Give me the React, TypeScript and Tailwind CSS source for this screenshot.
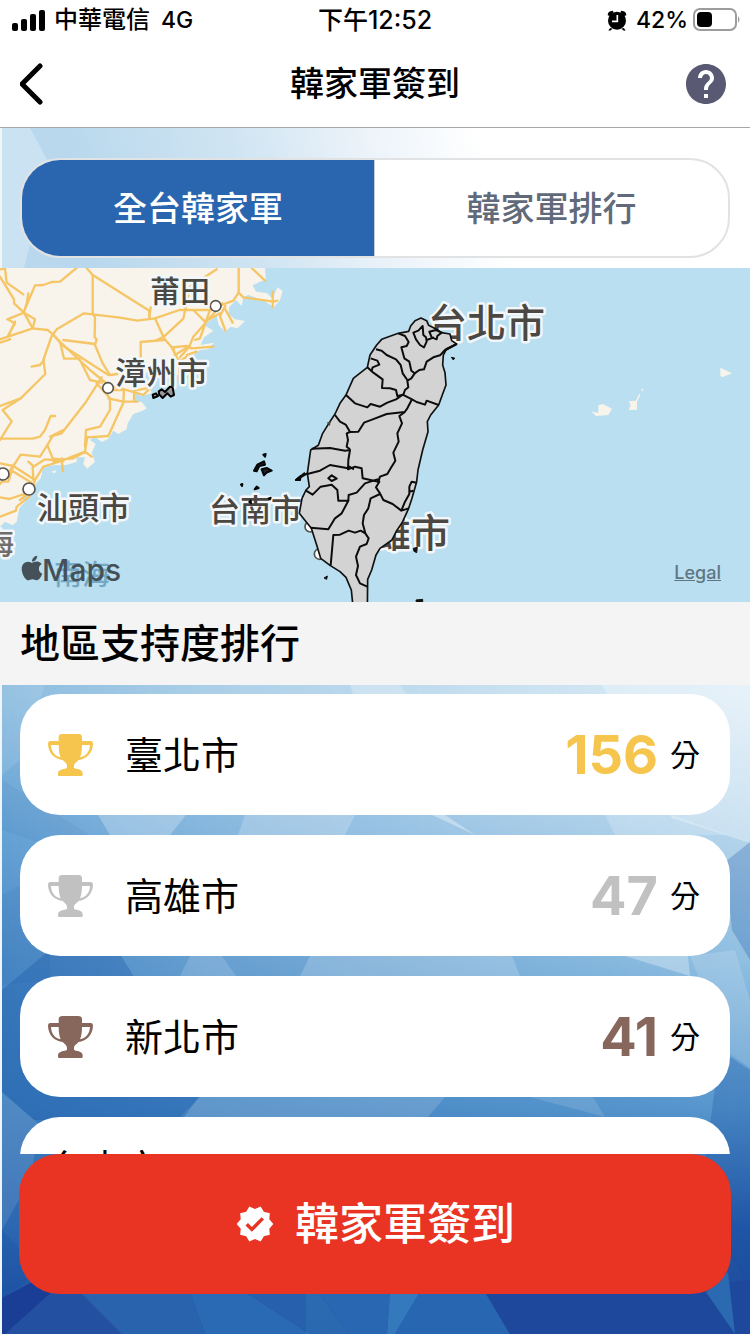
import { FaApple } from "react-icons/fa";
import { MdHelp, MdVerified } from "react-icons/md";

type Region = { name: string; score?: number; color?: string };

const regions: Region[] = [
  { name: "臺北市", score: 156, color: "#f5c54e" },
  { name: "高雄市", score: 47, color: "#c1c1c1" },
  { name: "新北市", score: 41, color: "#87665c" },
  { name: "台中市" },
];

function Backdrop() {
  return (
    <svg
      className="absolute inset-0 -z-10 h-full w-full"
      viewBox="0 0 750 1334"
      preserveAspectRatio="none"
      aria-hidden="true"
    >
      <defs>
        <linearGradient id="bd-left" x1="0" y1="0" x2="0" y2="1">
          <stop offset="0.52" stopColor="#8bbcdf" />
          <stop offset="0.62" stopColor="#67a3d5" />
          <stop offset="0.72" stopColor="#4b8ac6" />
          <stop offset="0.83" stopColor="#3b7cbd" />
          <stop offset="0.92" stopColor="#2d68b2" />
          <stop offset="1" stopColor="#1f4c9f" />
        </linearGradient>
        <linearGradient id="bd-right" x1="0" y1="0" x2="0" y2="1">
          <stop offset="0.52" stopColor="#dcecf6" />
          <stop offset="0.62" stopColor="#b7d6ec" />
          <stop offset="0.72" stopColor="#90bfe1" />
          <stop offset="0.83" stopColor="#5897cd" />
          <stop offset="0.92" stopColor="#2559a8" />
          <stop offset="1" stopColor="#1a4596" />
        </linearGradient>
        <linearGradient id="bd-fade" x1="0" y1="0" x2="1" y2="0">
          <stop offset="0" stopColor="#000" />
          <stop offset="0.28" stopColor="#666" />
          <stop offset="0.72" stopColor="#ccc" />
          <stop offset="1" stopColor="#fff" />
        </linearGradient>
        <linearGradient id="bd-top" gradientUnits="userSpaceOnUse" x1="80" y1="200" x2="470" y2="100">
          <stop offset="0" stopColor="#b9d8ed" />
          <stop offset="0.4" stopColor="#cfe4f2" />
          <stop offset="0.7" stopColor="#eaf2f9" />
          <stop offset="1" stopColor="#ffffff" />
        </linearGradient>
        <mask id="bd-mask">
          <rect width="750" height="1334" fill="url(#bd-fade)" />
        </mask>
      </defs>
      <rect width="750" height="1334" fill="url(#bd-left)" />
      <rect width="750" height="1334" fill="url(#bd-right)" mask="url(#bd-mask)" />
      <rect width="750" height="300" fill="url(#bd-top)" />
      <g fill="#ffffff">
        <path d="M0 128 H30 L50 165 L24 268 H0Z" opacity="0.25" />
        <path d="M350 685 L355 700 H410 L400 685Z" opacity="0.25" />
        <path d="M600 680 H750 V843 L672 818Z" opacity="0.3" />
        <path d="M98 815 L110 835 H170 L186 815Z" opacity="0.25" />
        <path d="M245 815 L238 835 H345 L355 815Z" opacity="0.2" />
        <path d="M432 815 L475 835 L445 815Z" opacity="0.35" />
        <path d="M605 815 L615 835 H728 L672 815Z" opacity="0.2" />
        <path d="M190 956 L180 976 H236 L222 956Z" opacity="0.15" />
        <path d="M310 956 L300 976 H520 L512 956Z" opacity="0.18" />
        <path d="M625 956 L690 976 L688 956Z" opacity="0.3" />
        <path d="M690 956 L730 1054 L750 1068 V1000 L735 950Z" opacity="0.15" />
        <path d="M200 1097 L180 1117 H428 L445 1097Z" opacity="0.14" />
        <path d="M530 1097 L605 1117 L593 1097Z" opacity="0.12" />
        <path d="M2 1092 L40 1125 L30 1180 L2 1230Z" opacity="0.1" />
        <path d="M2 685 H45 L20 760 L2 775Z" opacity="0.1" />
      </g>
      <g fill="#0f4ba0">
        <path d="M2 780 L50 810 L90 835 L60 850 L2 830Z" opacity="0.06" />
        <path d="M2 895 L50 870 V980 L2 985Z" opacity="0.07" />
        <path d="M45 954 L2 990 V1092 L34 1120 H182 L204 1090 L120 954Z" opacity="0.28" />
        <path d="M750 842 L725 862 L732 930 L750 960Z" opacity="0.25" />
        <path d="M720 1050 L750 1070 V1290 L700 1200Z" opacity="0.25" />
        <path d="M2 1230 L40 1270 L2 1300Z" opacity="0.2" />
      </g>
      <g>
        <path d="M2 1298 L42 1277 L52 1292 L5 1334 H2Z" fill="#1a3d96" />
        <path d="M52 1292 H80 L125 1334 H5Z" fill="#2450a2" />
        <path d="M80 1292 H190 L205 1334 H122Z" fill="#2963ae" />
        <path d="M190 1292 H245 L310 1334 H205Z" fill="#2a69b3" />
        <path d="M245 1292 H306 V1334 H310Z" fill="#2761ad" />
        <path d="M306 1292 V1334 H350 L318 1292Z" fill="#347dbe" opacity="0.6" />
        <path d="M318 1292 H390 L387 1334 H350Z" fill="#2a67b2" />
        <path d="M390 1292 L387 1334 H395 L420 1292Z" fill="#3379bc" />
        <path d="M420 1292 L395 1334 H510 L485 1292Z" fill="#2866b1" />
        <path d="M485 1292 L510 1334 H750 V1280 L650 1292Z" fill="#1d489b" />
        <path d="M706 1292 L728 1272 L735 1334Z" fill="#2b6ab1" />
      </g>
      <rect width="2" height="1334" fill="#eef6fa" />
    </svg>
  );
}

function StatusBar() {
  return (
    <div className="grid h-10 grid-cols-3 items-center px-3 text-[23px] leading-10 font-medium">
      <div className="flex items-center">
        <svg className="h-[22px] w-[34px]" viewBox="0 0 34 22" aria-hidden="true">
          <rect x="0" y="14" width="6" height="8" rx="2" />
          <rect x="9" y="10" width="6" height="12" rx="2" />
          <rect x="18" y="5" width="6" height="17" rx="2" />
          <rect x="27" y="1" width="6" height="21" rx="2" />
        </svg>
        <span className="ml-2 text-2xl leading-10">中華電信</span>
        <span className="ml-[11px]">4G</span>
      </div>
      <span className="text-center text-[25px] leading-10">下午12:52</span>
      <div className="-mr-0.5 flex items-center justify-end">
        <svg className="h-[21px] w-[20px]" viewBox="0 0 60 63" aria-hidden="true">
          <circle cx="30" cy="32" r="27" />
          <path d="M2 16 Q2 3 17 2 L20 7 L8 18Z M58 16 Q58 3 43 2 L40 7 L52 18Z M10 54 L4 61 L9 62 L17 56Z M50 54 L56 61 L51 62 L43 56Z" />
          <path d="M31 15 V34 H15" fill="none" stroke="#fff" strokeWidth="5" />
        </svg>
        <span className="ml-[9px]">42%</span>
        <svg className="ml-1 h-6 w-12" viewBox="0 0 48 24" aria-hidden="true">
          <rect x="2" y="1" width="42" height="21" rx="6" fill="none" stroke="#9c9c9c" strokeWidth="2" />
          <rect x="5" y="4" width="15" height="15" rx="4" />
          <path d="M46 8 Q49 11.5 46 15Z" fill="#9c9c9c" />
        </svg>
      </div>
    </div>
  );
}

const roads = [
  "M0 28 L15 26 L20 68 L70 103 M0 50 L42 118 L42 130 L72 158 L98 205 L143 210 L160 225 L190 258 L325 345 M85 100 L80 130 L72 155 L105 76 L130 75 L155 66 L180 65 L232 22",
  "M72 158 L22 178 L45 190 L25 225 L30 238 L0 248 M72 158 L105 178 L98 205 L0 238 M28 222 L45 185",
  "M258 22 L278 45 L448 152 L448 172 M278 45 V160 L285 172 L284 232 L290 238 L285 255 L308 310 L330 345 L352 342",
  "M160 222 L170 208 L252 160 L360 173 L412 182 L465 175 L538 150 H630 L665 135 L700 122 L716 98 V24 M190 240 L285 252",
  "M465 175 L492 235 L515 262 L560 258 L575 265 L640 260 M448 172 L452 142 M492 240 L422 246 V300 M470 240 L492 230 L550 176 L560 130 L570 80 L650 28",
  "M668 130 L580 230 L568 260 L540 292 M630 150 L600 235 L585 240 M580 150 L615 185 L660 160 M676 138 L660 168 L676 212 M676 148 L698 188 M716 98 L730 112 L820 125 L832 122 M818 95 V142 M755 24 L795 62",
  "M155 228 L130 300 L136 342 L62 415 L8 450 L35 484 L0 540 M95 320 L120 315 L132 300 M160 225 L180 245 L192 296 H238 L270 360 L305 368 M185 250 L270 330 L325 375",
  "M305 352 L255 430 L185 520 L150 530 M290 370 L330 415 V450 L300 500 L258 510 L255 560 M340 390 H372 L370 428 L325 528 L262 532 M325 415 L370 425 H412 M402 425 V392 L440 385 M345 380 L430 405 L450 385",
  "M0 438 L62 415 M165 468 H152 L135 510 L120 530 L98 536 H0 M190 510 L160 525 L142 555 L120 590 L62 584 L40 618 L0 672",
  "M142 555 L158 595 L190 600 L255 575 L275 590 M262 530 L255 575 L220 595 L160 600 L135 598 L98 622 L100 660 M85 605 L100 618 M160 605 L190 603 M185 595 L189 634",
  "M0 610 L40 618 L105 660 L130 620 L185 603 M36 632 L95 668 M0 712 L28 717 L85 698 M105 662 L88 710 L50 740 L48 752 L0 770 M85 700 L60 720 M10 665 H25 L40 618",
  "M515 262 L535 300 M568 258 L525 285 L520 262 M568 285 L545 300 M590 275 L560 285 M538 300 V360 L560 350",
];

function TaiwanMap() {
  return (
    <div className="relative">
      <svg
        className="block h-[334px] w-full bg-[#b9dff1]"
        viewBox="0 0 750 334"
        preserveAspectRatio="xMidYMid slice"
        role="img"
        aria-label="台灣地圖"
      >
        <g transform="translate(0 -8) scale(0.33333)">
          <path
            fill="#f8f4eb"
            d="M-10 20 H795 L797 60 L780 65 L758 76 L768 95 L800 99 L818 116 L832 82 L848 93 L840 120 L822 142 L792 122 L745 105 L730 112 L725 138 L708 120 L688 140 L685 162 L705 178 L735 183 L712 205 L692 200 L675 215 L656 195 L650 168 L612 195 L640 212 L612 232 L602 255 L642 248 L625 268 L600 270 L580 285 L590 305 L565 320 L560 372 L548 380 L535 345 L440 335 L430 365 L450 385 L455 400 L425 408 L405 400 L400 425 L425 426 L440 445 L428 452 L400 462 L383 490 L380 508 L355 522 L340 512 L325 536 L305 546 L285 530 L270 540 L287 552 L275 578 L285 605 L262 626 L250 612 L255 592 L230 592 L230 606 L198 615 L160 616 L130 622 L122 655 L100 680 L105 700 L60 715 L78 722 L58 745 L50 785 L38 796 L15 785 L0 800 H-10Z"
          />
          <g transform="translate(1680 264)" fill="#f8f4eb">
            <path d="M94 190 L115 195 V172 L128 168 L156 182 L145 201 L108 204Z" />
            <path d="M206 160 L228 158 L237 138 L241 140 L231 162 V185 L206 186 L212 172Z M242 126 L251 122 L249 129Z" />
            <path d="M481 59 L516 76 L488 87 L481 84Z" />
          </g>
          <path fill="#f8f4eb" d="M153 635 L170 630 L165 640Z" />
          <g fill="none" stroke="#f5c566" strokeWidth="7" strokeLinejoin="round" strokeLinecap="round">
            {roads.map((d) => (
              <path key={d} d={d} />
            ))}
          </g>
          <g fill="#fff" stroke="#57544f" strokeWidth="5">
            <circle cx="647" cy="138" r="16" />
            <circle cx="324" cy="384" r="16" />
            <circle cx="9" cy="642" r="18" />
            <circle cx="87" cy="687" r="18" />
            <circle cx="931" cy="800" r="16" />
            <circle cx="959" cy="882" r="16" />
          </g>
        </g>

        <g
          fill="#4b4843"
          stroke="#f4f7f9"
          strokeWidth="5"
          strokeLinejoin="round"
          paintOrder="stroke"
          fontWeight="500"
          fontFamily="Inter, 'Noto Sans CJK TC', sans-serif"
        >
          <text x="150" y="34" fontSize="30">莆田</text>
          <text x="115" y="116" fontSize="31">漳州市</text>
          <text x="37" y="251" fontSize="31">汕頭市</text>
          <text x="209" y="253" fontSize="31">台南市</text>
          <text x="428" y="69" fontSize="39">台北市</text>
          <text x="333" y="279" fontSize="39">高雄市</text>
          <text x="-16" y="286" fontSize="30" fill="#706e6b">海</text>
          <text x="54" y="317" fontSize="28" fill="#74a8c4" stroke="none">南海</text>
        </g>

        <path
          transform="translate(0 -8) scale(0.33333)"
          d="M458 404 L468 400 L474 408 L460 414Z M476 394 L485 388 L495 396 L510 380 L518 383 L522 405 L512 410 L502 400 L488 414 L478 404Z"
          fill="#999"
          stroke="#000"
          strokeWidth="6"
          strokeLinejoin="round"
        />

        <g transform="translate(290 22) scale(0.33333)" strokeLinejoin="round">
          <path
            fill="#d3d3d3"
            stroke="#111"
            strokeWidth="5"
            d="M356 124 L362 108 L375 92 L393 84 L410 92 L416 106 L438 117 L455 128 L480 132 L485 152 L500 162 L470 176 L460 195 L458 225 L465 248 L468 285 L458 312 L446 345 L422 375 L412 395 L414 425 L398 480 L384 540 L380 575 L366 625 L356 655 L338 695 L320 722 L306 750 L270 775 L258 795 L245 840 L233 868 L232 960 H190 L184 900 L168 862 L150 845 L120 826 L92 805 L80 765 L64 715 L44 690 L28 670 L36 625 L48 600 L58 590 L52 550 L62 480 L85 466 L98 430 L118 398 L135 372 L150 340 L168 315 L190 265 L232 232 L240 195 L260 165 L275 148 L325 130Z"
          />
          <g fill="none" stroke="#0c0c0c" strokeWidth="6">
            <path d="M325 130 L345 138 L356 156 L350 168 L334 172 L343 205 L358 215 L364 242 L374 250 L364 265 L352 272 L355 292 L345 300 L340 314 L322 318 L318 300 L300 295 L276 294 L278 268 L250 248 L232 232" />
            <path d="M500 162 L465 180 L450 196 L430 202 L410 215 L402 238 L388 240 L374 250" />
            <path d="M398 108 L385 122 L370 128 L378 148 L390 165 L402 172 L410 155 L408 142 L400 135Z M418 125 L438 120 L455 128 L442 138 L440 148 L425 142Z M410 150 L432 142 M500 162 L468 180" />
            <path d="M258 178 L275 182 L290 195 L318 208 L332 225 L338 250 L352 270 M242 205 L262 212 L268 224 L248 232 L244 245" />
            <path d="M168 315 L195 340 L232 352 L242 342 L270 350 L292 338 L318 328 L338 314 L366 328 L380 336 L405 344 L410 332 L446 345" />
            <path d="M366 328 L352 355 L344 366 L290 372 L248 388 L222 398 L205 425 L180 426 L168 405 L150 395 L135 375" />
            <path d="M345 366 L328 378 L336 400 L322 430 L326 455 L310 488 L316 512 L302 535 L292 552 L270 560 L265 575 L218 565 L215 535 L195 530 L174 538 L175 510 L180 480 L165 482 L120 474 L65 476" />
            <path d="M180 426 L170 430 L174 450 L170 470 L180 478 M174 528 L192 538 M52 552 L90 542 L120 525 L174 535 M52 550 L18 570 L45 548" />
            <path d="M115 565 L125 556 L140 566 L125 573Z M48 602 L68 614 L92 590 L125 584 L142 600 L145 632 L175 632 L155 670 L135 685 L115 718 L62 713" />
            <path d="M175 632 L176 615 L200 608 L225 580 L262 568 L268 575 L258 592 L270 610 L280 630 L308 642 L334 662 L345 635 L358 612 L358 590 L365 575 L380 578 M334 662 L356 655 M358 605 L370 602" />
            <path d="M270 612 L242 625 L235 655 L222 675 L218 700 L226 730 L236 745 L230 762 L210 770 L198 800 L204 828 L198 855 L210 880 L232 890 M226 730 L212 722 L195 728 L176 722 L150 734 L130 735 L122 826" />
          </g>
          <path
            fill="#111"
            stroke="#111"
            strokeWidth="3"
            d="M484 202 L494 204 L490 210Z M102 864 L112 858 L110 868Z M370 775 L382 772 L380 788 L372 784Z M378 930 L398 928 V940 H380Z"
          />
          <path fill="#4a463e" d="M110 398 L122 394 L120 408Z" />
        </g>

        <g transform="translate(0 162) scale(0.33333)" fill="#222" stroke="#050505" strokeWidth="6" strokeLinejoin="round">
          <path d="M790 74 L797 72 L795 80Z M762 122 L772 104 L792 94 L795 104 L778 108 L770 124Z M785 118 L800 114 L815 122 L800 128 L792 136Z M723 164 L727 162 L726 168Z M764 178 L770 170 L776 174Z M806 205 L812 203 L810 208Z M748 216 L752 212 L753 220Z M888 150 L902 138 L900 150Z" />
        </g>
      </svg>
      <div className="absolute bottom-4 left-[18px] flex items-center text-[#445159]">
        <FaApple className="-mt-1 size-7" aria-hidden="true" />
        <span className="-ml-1 text-[30px] leading-8 font-medium">Maps</span>
      </div>
      <a href="#legal" className="absolute right-[29px] bottom-[17px] text-lg leading-6 font-medium text-[#5f7681] underline">
        Legal
      </a>
    </div>
  );
}

function Trophy({ color }: { color: string }) {
  return (
    <svg className="h-[42px] w-[45px] shrink-0" viewBox="0 0 135 126" fill={color} aria-hidden="true">
      <path
        fillRule="evenodd"
        d="M43 0 H91 Q102 0 102 10 V21 H128 Q135 21 135 30 C134 60 112 76 92 78 C84 86 78 89 78 95 V99 C78 102 80 103 84 104 C96 105 104 110 104 118 V123 Q104 126 100 126 H34 Q30 126 30 123 V118 C30 110 40 105 50 104 C56 103 57 102 57 98 V95 C57 89 50 84 44 78 C22 76 1 60 0 30 Q0 21 7 21 H32 V10 Q32 0 43 0Z M9 33 H32 C32 48 34 62 38 70 C22 67 10 55 9 33Z M102 33 H126 C125 55 112 67 96 70 C100 62 102 48 102 33Z"
      />
    </svg>
  );
}

export default function App() {
  return (
    <div className="relative isolate flex h-screen flex-col overflow-hidden bg-white font-[Inter,'Noto_Sans_CJK_TC',sans-serif] text-black">
      <Backdrop />
      <header className="shrink-0 border-b border-[#a6a6a6] bg-white">
        <StatusBar />
        <div className="flex h-[87px] items-center justify-between px-5">
          <button type="button" aria-label="返回" className="flex size-12 items-center">
            <svg className="h-[42px] w-6" viewBox="0 0 24 42" fill="none" stroke="#000" strokeWidth="5" strokeLinecap="round" strokeLinejoin="round" aria-hidden="true">
              <path d="M20 3 L2 21 L20 39" />
            </svg>
          </button>
          <h1 className="text-[34px] leading-10 font-medium">韓家軍簽到</h1>
          <button type="button" aria-label="說明" className="flex size-12 items-center">
            <MdHelp className="size-12 text-[#595973]" />
          </button>
        </div>
      </header>

      <div className="shrink-0 px-5 pt-[30px] pb-[10px]">
        <nav className="grid h-[100px] grid-cols-2 overflow-hidden rounded-[40px] border-2 border-[#e1e2e4] bg-white text-[34px] font-medium">
          <button type="button" aria-pressed="true" className="border-r border-[#c3cbd6] bg-[#2a66b0] text-white">
            全台韓家軍
          </button>
          <button type="button" aria-pressed="false" className="text-[#616a7a]">
            韓家軍排行
          </button>
        </nav>
      </div>

      <div className="shrink-0">
        <TaiwanMap />
        <h2 className="bg-[#f4f4f4] px-5 text-[40px] leading-[83px] font-medium">地區支持度排行</h2>
      </div>

      <ul className="flex min-h-0 flex-1 flex-col gap-5 overflow-y-auto px-5 pt-[9px] [scrollbar-width:none]">
        {regions.map((r) => (
          <li
            key={r.name}
            className={
              r.color
                ? "flex h-[121px] shrink-0 items-center gap-8 rounded-[40px] bg-white pr-[30px] pl-7"
                : "flex h-[121px] shrink-0 items-start rounded-[40px] bg-white px-7 pt-8"
            }
          >
            {r.color && <Trophy color={r.color} />}
            <span className="text-[38px] leading-none">{r.name}</span>
            {r.score !== undefined && (
              <span className="ml-auto flex items-center gap-3">
                <strong className="text-[54px] leading-none font-bold" style={{ color: r.color }}>
                  {r.score}
                </strong>
                <span className="text-[30px] leading-none">分</span>
              </span>
            )}
          </li>
        ))}
      </ul>

      <div className="shrink-0 px-[19px] pb-10">
        <button type="button" className="flex h-[140px] w-full items-center justify-center gap-5 rounded-[40px] bg-[#e93323] text-[44px] font-medium text-white">
          <MdVerified className="size-10" aria-hidden="true" />
          韓家軍簽到
        </button>
      </div>
    </div>
  );
}
